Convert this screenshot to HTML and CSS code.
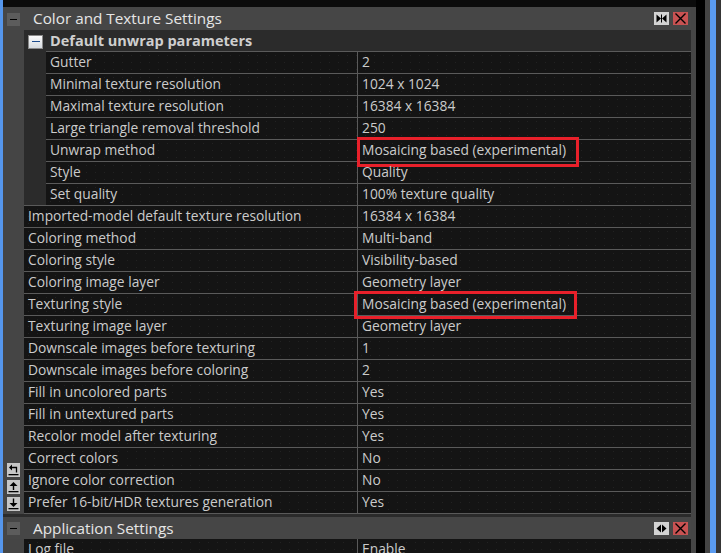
FILE: index.html
```html
<!DOCTYPE html>
<html>
<head>
<meta charset="utf-8">
<link rel="stylesheet" href="styles.css">
</head>
<body>
<div class="app">
  <div class="edge-left"></div>
  <div class="panel">
    <div class="topbar"></div>
    <section class="sec">
      <div class="sec-head">
        <span class="sq-minus"></span>
        <span class="sec-title">Color and Texture Settings</span>
        <span class="btns">
          <span class="btn btn-light"><svg width="15" height="13" viewBox="0 0 15 13"><path d="M2.5 2.5 L7 6.5 L2.5 10.5Z M12.5 2.5 L8 6.5 L12.5 10.5Z" fill="#000"/><rect x="7" y="2.5" width="1" height="8" fill="#000"/></svg></span>
          <span class="btn btn-close"><svg width="15" height="13" viewBox="0 0 15 13"><path d="M2.5 1.5 L12.5 11.5 M12.5 1.5 L2.5 11.5" stroke="#000" stroke-width="1.4"/></svg></span>
        </span>
      </div>
      <div class="sec-body">
        <div class="gutter">
          <span class="gicon"><svg width="13" height="14" viewBox="0 0 13 14"><path d="M2 4.5 L5 1.5 L5 7.5Z" fill="#000"/><path d="M5 4.5 H9.5 V9.5" stroke="#000" stroke-width="1.3" fill="none"/><rect x="1.5" y="11" width="10" height="1.3" fill="#000"/></svg></span>
          <span class="gicon"><svg width="13" height="14" viewBox="0 0 13 14"><path d="M6.5 2 L10.5 6 L2.5 6Z" fill="#000"/><rect x="5.8" y="5.5" width="1.4" height="4.5" fill="#000"/><rect x="1.5" y="11" width="10" height="1.3" fill="#000"/></svg></span>
          <span class="gicon"><svg width="13" height="14" viewBox="0 0 13 14"><rect x="5.8" y="1.5" width="1.4" height="4.5" fill="#000"/><path d="M6.5 10 L10.5 6 L2.5 6Z" fill="#000"/><rect x="1.5" y="11" width="10" height="1.3" fill="#000"/></svg></span>
        </div>
        <div class="props">
          <div class="group-head"><span class="grp-toggle"><span></span></span><span class="grp-title">Default unwrap parameters</span></div>
          <div class="group-body">
            <div class="row"><div class="k">Gutter</div><div class="v">2</div></div>
            <div class="row"><div class="k">Minimal texture resolution</div><div class="v">1024 x 1024</div></div>
            <div class="row"><div class="k">Maximal texture resolution</div><div class="v">16384 x 16384</div></div>
            <div class="row"><div class="k">Large triangle removal threshold</div><div class="v">250</div></div>
            <div class="row"><div class="k">Unwrap method</div><div class="v">Mosaicing based (experimental)<span class="mark mark-1"></span></div></div>
            <div class="row"><div class="k">Style</div><div class="v">Quality</div></div>
            <div class="row"><div class="k">Set quality</div><div class="v">100% texture quality</div></div>
          </div>
          <div class="row"><div class="k">Imported-model default texture resolution</div><div class="v">16384 x 16384</div></div>
          <div class="row"><div class="k">Coloring method</div><div class="v">Multi-band</div></div>
          <div class="row"><div class="k">Coloring style</div><div class="v">Visibility-based</div></div>
          <div class="row"><div class="k">Coloring image layer</div><div class="v">Geometry layer</div></div>
          <div class="row"><div class="k">Texturing style</div><div class="v">Mosaicing based (experimental)<span class="mark mark-2"></span></div></div>
          <div class="row"><div class="k">Texturing image layer</div><div class="v">Geometry layer</div></div>
          <div class="row"><div class="k">Downscale images before texturing</div><div class="v">1</div></div>
          <div class="row"><div class="k">Downscale images before coloring</div><div class="v">2</div></div>
          <div class="row"><div class="k">Fill in uncolored parts</div><div class="v">Yes</div></div>
          <div class="row"><div class="k">Fill in untextured parts</div><div class="v">Yes</div></div>
          <div class="row"><div class="k">Recolor model after texturing</div><div class="v">Yes</div></div>
          <div class="row"><div class="k">Correct colors</div><div class="v">No</div></div>
          <div class="row"><div class="k">Ignore color correction</div><div class="v">No</div></div>
          <div class="row last"><div class="k">Prefer 16-bit/HDR textures generation</div><div class="v">Yes</div></div>
        </div>
      </div>
      <div class="sep-band"></div>
    </section>
    <section class="sec">
      <div class="sec-head sec-head-2">
        <span class="sq-minus"></span>
        <span class="sec-title">Application Settings</span>
        <span class="btns">
          <span class="btn btn-light"><svg width="15" height="13" viewBox="0 0 15 13"><path d="M2.5 6.5 L7 2.5 L7 10.5Z M12.5 6.5 L8 2.5 L8 10.5Z" fill="#000"/></svg></span>
          <span class="btn btn-close"><svg width="15" height="13" viewBox="0 0 15 13"><path d="M2.5 1.5 L12.5 11.5 M12.5 1.5 L2.5 11.5" stroke="#000" stroke-width="1.4"/></svg></span>
        </span>
      </div>
      <div class="sec-body">
        <div class="gutter"></div>
        <div class="props">
          <div class="row first"><div class="k">Log file</div><div class="v">Enable</div></div>
        </div>
      </div>
    </section>
  </div>
  <div class="strip-black"></div>
  <div class="strip-gray"></div>
  <div class="strip-blue"></div>
  <div class="strip-dark"></div>
</div>
</body>
</html>
```

FILE: styles.css
```css
* { box-sizing: border-box; }
html, body {
  margin: 0;
  padding: 0;
  width: 721px;
  height: 553px;
  overflow: hidden;
  background: #3a3a3a;
  font-family: "Open Sans", "Noto Sans", "DejaVu Sans", sans-serif;
}
.app {
  display: flex;
  width: 721px;
  height: 553px;
}
.edge-left { width: 3px; background: #5596ec; flex: none; }
.strip-black { width: 9px; background: #000; flex: none; }
.strip-gray { width: 5px; background: #444; flex: none; }
.strip-blue { width: 6px; background: #5a9bf0; flex: none; }
.strip-dark { width: 5px; background: #353535; flex: none; }

.panel {
  width: 693px;
  flex: none;
  background: #454545;
  padding-right: 5px;
  display: flex;
  flex-direction: column;
  overflow: hidden;
}
.topbar { height: 7px; background: #0b0b0b; margin-right: -5px; flex: none; }

.sec-head {
  height: 23px;
  display: flex;
  align-items: center;
  background: #464646;
  padding-left: 4px;
  padding-right: 3px;
}
.sec-head-2 { height: 22px; }
.sq-minus {
  width: 13px;
  height: 13px;
  background: #5c5c5c;
  position: relative;
  margin-top: 1px;
}
.sq-minus::after {
  content: "";
  position: absolute;
  left: 3px;
  top: 6px;
  width: 7px;
  height: 1px;
  background: #000;
}
.sec-title {
  margin-left: 13px;
  font-size: 15.3px;
  color: #e6e6e6;
  flex: 1;
  line-height: 23px;
}
.btns { display: flex; gap: 4px; }
.btn {
  width: 15px;
  height: 13px;
  display: block;
}
.btn svg { display: block; }
.btn-light { background: #d3d3d3; }
.btn-close { background: #c75252; }

.sec-body { display: flex; }
.gutter {
  width: 21px;
  flex: none;
  display: flex;
  flex-direction: column;
  justify-content: flex-end;
  gap: 3px;
  padding-left: 4px;
  padding-bottom: 3px;
}
.gicon {
  width: 13px;
  height: 14px;
  background: #c6c6c6;
  display: block;
}
.gicon svg { display: block; }
.props { flex: 1; min-width: 0; }

.group-head {
  height: 21px;
  background: #2b2b2b;
  display: flex;
  align-items: center;
  padding-left: 4px;
}
.grp-toggle {
  width: 15px;
  height: 14px;
  border: 1px solid #8a8a8a;
  background: linear-gradient(#fafafa, #d6dbe0);
  position: relative;
  margin-top: 3px;
}
.grp-toggle span {
  position: absolute;
  left: 3px;
  top: 5px;
  width: 8px;
  height: 1px;
  background: #1d4c8e;
}
.grp-title {
  margin-left: 7px;
  font-weight: bold;
  font-size: 14.5px;
  color: #cfcfcf;
}
.group-body {
  background: #2b2b2b;
  padding-left: 22px;
}

.row {
  display: grid;
  grid-template-columns: 334px 1fr;
  height: 22px;
  border-top: 1px solid #5a5a5a;
  background-color: #141414;
  background-image: radial-gradient(circle, #222 0.6px, transparent 1px);
  background-size: 9px 7px;
  font-size: 13.8px;
  line-height: 19px;
  color: #cbcbcb;
}
.group-body .row { grid-template-columns: 312px 1fr; }
.row.last { height: 23px; border-bottom: 1px solid #5a5a5a; }
.row.first { border-top: none; }
.k {
  border-right: 1px solid #5a5a5a;
  padding-left: 4px;
  white-space: nowrap;
  overflow: hidden;
}
.v {
  padding-left: 4px;
  white-space: nowrap;
  position: relative;
}
.mark {
  position: absolute;
  border: 3px solid #e8202a;
}
.mark-1 { left: -1px; top: -3px; width: 222px; height: 30px; }
.mark-2 { left: -4px; top: -3px; width: 223px; height: 28px; }

.sep-band {
  height: 3px;
  background: #2b2b2b;
}
```
